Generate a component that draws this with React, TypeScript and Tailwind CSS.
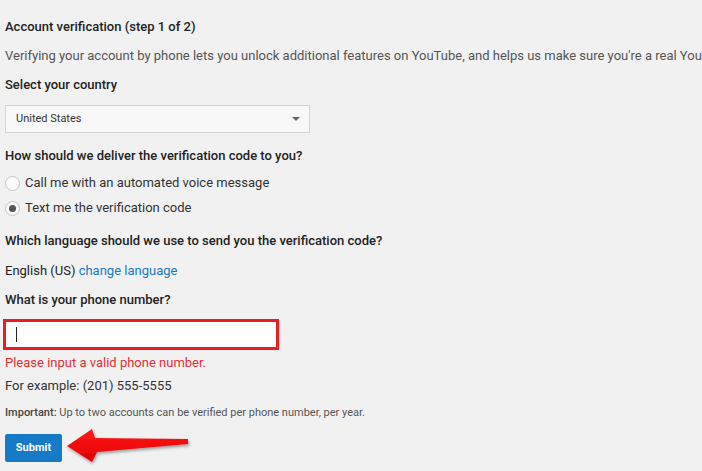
import React from "react";

const font = { fontFamily: "Roboto, 'Liberation Sans', Arial, sans-serif" };

function Radio({ checked, label }: { checked?: boolean; label: string }) {
  return (
    <label className="flex h-[20px] items-center gap-[5px] text-[13px] text-[#333]">
      <span className="flex h-[15px] w-[15px] items-center justify-center rounded-full border border-[#c6c6c6] bg-[#fafafa]">
        {checked && <span className="h-[7px] w-[7px] rounded-full bg-[#555]" />}
      </span>
      {label}
    </label>
  );
}

function RedArrow() {
  return (
    <svg
      className="pointer-events-none absolute left-[50px] top-[-14px]"
      width="140"
      height="52"
      viewBox="0 0 140 52"
    >
      <defs>
        <linearGradient id="arrowFill" x1="0" y1="0" x2="0" y2="1">
          <stop offset="0" stopColor="#ff1a1a" />
          <stop offset="1" stopColor="#e00000" />
        </linearGradient>
        <filter id="arrowShadow" x="-10%" y="-20%" width="130%" height="150%">
          <feDropShadow dx="1" dy="2" stdDeviation="1.5" floodColor="#000" floodOpacity="0.35" />
        </filter>
      </defs>
      <polygon
        points="12,26 37,9 40,18 133,19 133,24 42,32 37,42"
        fill="url(#arrowFill)"
        filter="url(#arrowShadow)"
      />
    </svg>
  );
}

export default function App() {
  return (
    <div className="h-[471px] w-[702px] overflow-hidden bg-[#f1f1f1] pl-[5px]" style={font}>
      <h1 className="pt-[18px] text-[13px] font-medium leading-[17px] text-[#222]">
        Account verification (step 1 of 2)
      </h1>

      {/* the sentence runs past the right edge in the screenshot */}
      <p className="mt-[12px] whitespace-nowrap text-[13px] leading-[17px] text-[#555]">
        Verifying your account by phone lets you unlock additional features on YouTube, and helps us make sure you're a real YouTube user and not a robot.
      </p>

      <h2 className="mt-[12px] text-[13px] font-medium leading-[17px] text-[#222]">
        Select your country
      </h2>

      <div className="mt-[12px] flex h-[28px] w-[305px] items-center justify-between border border-[#d3d3d3] bg-[#f8f8f8] pl-[10px] pr-[9px] text-[11px] text-[#333]">
        <span>United States</span>
        <span className="h-0 w-0 border-x-[4px] border-t-[4px] border-x-transparent border-t-[#666]" />
      </div>

      <h2 className="mt-[14px] text-[13px] font-medium leading-[17px] text-[#222]">
        How should we deliver the verification code to you?
      </h2>

      <div className="mt-[9px] flex flex-col gap-[5px]">
        <Radio label="Call me with an automated voice message" />
        <Radio checked label="Text me the verification code" />
      </div>

      <h2 className="mt-[14px] text-[13px] font-medium leading-[17px] text-[#222]">
        Which language should we use to send you the verification code?
      </h2>

      <p className="mt-[13px] text-[13px] leading-[17px] text-[#222]">
        English (US) <a className="text-[#167ac6]">change language</a>
      </p>

      <h2 className="mt-[12px] text-[13px] font-medium leading-[17px] text-[#222]">
        What is your phone number?
      </h2>

      <div className="ml-[-2px] mt-[11px] flex h-[31px] w-[276px] items-center border-[3px] border-[#ec1c24] bg-white pl-[10px]">
        <span className="h-[15px] w-[1px] bg-[#222]" />
      </div>

      <p className="mt-[4px] text-[13px] leading-[17px] text-[#e62e36]">
        Please input a valid phone number.
      </p>

      <p className="mt-[6px] text-[13px] leading-[17px] text-[#333]">
        For example: (201) 555-5555
      </p>

      <p className="mt-[11px] text-[11px] leading-[15px] text-[#555]">
        <strong className="font-medium text-[#444]">Important:</strong> Up to two accounts can be verified per phone number, per year.
      </p>

      <div className="relative mt-[14px]">
        <button className="h-[28px] w-[57px] rounded-[2px] bg-[#167ac6] text-[11px] font-bold text-white">
          Submit
        </button>
        <RedArrow />
      </div>
    </div>
  );
}
